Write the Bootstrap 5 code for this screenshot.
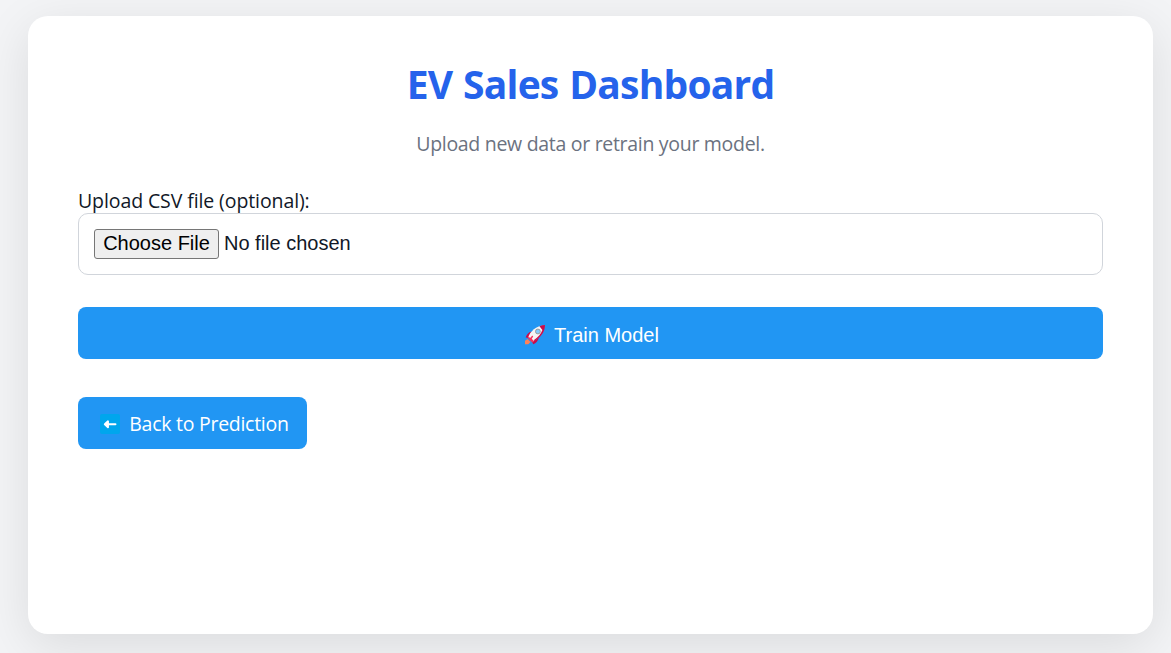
<!DOCTYPE html>
<html lang="en">
<head>
<meta charset="utf-8">
<meta name="viewport" content="width=device-width, initial-scale=1">
<title>EV Sales Dashboard</title>
<link href="https://cdn.jsdelivr.net/npm/bootstrap@5.3.0/dist/css/bootstrap.min.css" rel="stylesheet">
<style>
  body { background: #f3f4f6; color: #111827; font-family: "Segoe UI", "Open Sans", sans-serif; font-size: 19.5px; line-height: 27px; height: 653px; overflow: hidden; }
  .panel { margin: 16px 18px 0 28px; height: 618px; padding: 43px 50px; border-radius: 20px; box-shadow: 0 12px 50px rgba(0,0,0,.1); }
  .panel-title { color: #2563eb; font-size: 39px; line-height: 50px; letter-spacing: -.8px; word-spacing: 1.500px; margin: 0; }
  .panel-note { color: #6b7280; letter-spacing: -.3px; margin: 21px 0 30px; }
  .csv-label { display: block; letter-spacing: -.1px; height: 26px; }
  .csv-input { display: block; width: 100%; height: 62px; padding: 14px 15px; border: 1px solid #d1d5db; border-radius: 10px; color: #111827; font: 20px/30px "Liberation Sans", Arial, sans-serif; }
  .csv-input::file-selector-button { height: 30px; width: 125px; padding: 0 0 2px; margin: 0 5px 0 0; border: 1px solid #767676; border-radius: 3px; background: #efefef; color: #000; font: 20px/26px "Liberation Sans", Arial, sans-serif; }
  .action { --bs-btn-bg: #2196f3; --bs-btn-color: #fff; --bs-btn-hover-bg: #1976d2; --bs-btn-hover-color: #fff; height: 52px; border: 0; border-radius: 8px; }
  .train { margin-top: 32px; padding: 4px 0 0 2px; font: 20px/24px "Liberation Sans", Arial, sans-serif; }
  .back { margin-top: 38px; padding: 2px 0 0 4px; width: 229px; font-size: 19.5px; letter-spacing: -.27px; }
  .back-arrow { margin-right: 9px; }
</style>
</head>
<body>
<main class="panel bg-white">
  <h1 class="panel-title text-center fw-bold"><span>EV Sales Dashboard</span></h1>
  <p class="panel-note text-center"><span>Upload new data or retrain your model.</span></p>
  <form>
    <label class="csv-label" for="csv"><span>Upload CSV file (optional):</span></label>
    <input class="csv-input" type="file" id="csv" accept=".csv">
    <button type="button" class="btn action train w-100 d-flex align-items-center justify-content-center">
      <svg class="me-2" width="22" height="22" viewBox="0 0 22 22" aria-hidden="true">
        <path d="M1 20.300v-3.600L3.500 15l3 3-2.200 2.300z" fill="#ff8257"/>
        <path d="M7.500 7.500C4.500 8.200 2.500 10.500 1.700 13.500l3 .5zM14.800 13.500c-.7 3.200-2.600 5.600-5.600 6.800L8 17.500z" fill="#ca0b4a"/>
        <path d="M4.200 13.500C6 7.500 12 2 20.500 1.300 20.400 8.500 14.500 15 8.500 17.800z" fill="#f4f4f4"/>
        <path d="M15.500 2.300C17.300 1.500 19 1.100 20.600 1.100c.3 0 .4.200.4.500 0 6-4.500 12.200-10.500 15.400l-.8-.8C14.500 13 17.300 9.500 18.400 6z" fill="#ca0b4a"/>
        <path d="M4.200 13l2.300.7 1.700-2.200 1 .9-1.500 2.400 2.200 2.300-1.700 1.400-4.600-4.500z" fill="#f8315c"/>
        <circle cx="13.900" cy="7.500" r="2.400" fill="#83cbff" stroke="#9b9b9b" stroke-width="1"/>
      </svg>
      <span>Train Model</span>
    </button>
  </form>
  <a href="#" class="btn action back d-flex align-items-center justify-content-center">
    <svg class="back-arrow" width="20" height="20" viewBox="0 0 20 20" aria-hidden="true">
      <rect width="20" height="20" rx="2" fill="#00a6ed"/>
      <path d="M4.800 10.300L8 7.300v6zM8 10.300h7.500" fill="#fff" stroke="#fff" stroke-width="1.900" stroke-linecap="round" stroke-linejoin="round"/>
    </svg>
    <span>Back to Prediction</span>
  </a>
</main>
<script src="https://cdn.jsdelivr.net/npm/bootstrap@5.3.0/dist/js/bootstrap.bundle.min.js"></script>
</body>
</html>
